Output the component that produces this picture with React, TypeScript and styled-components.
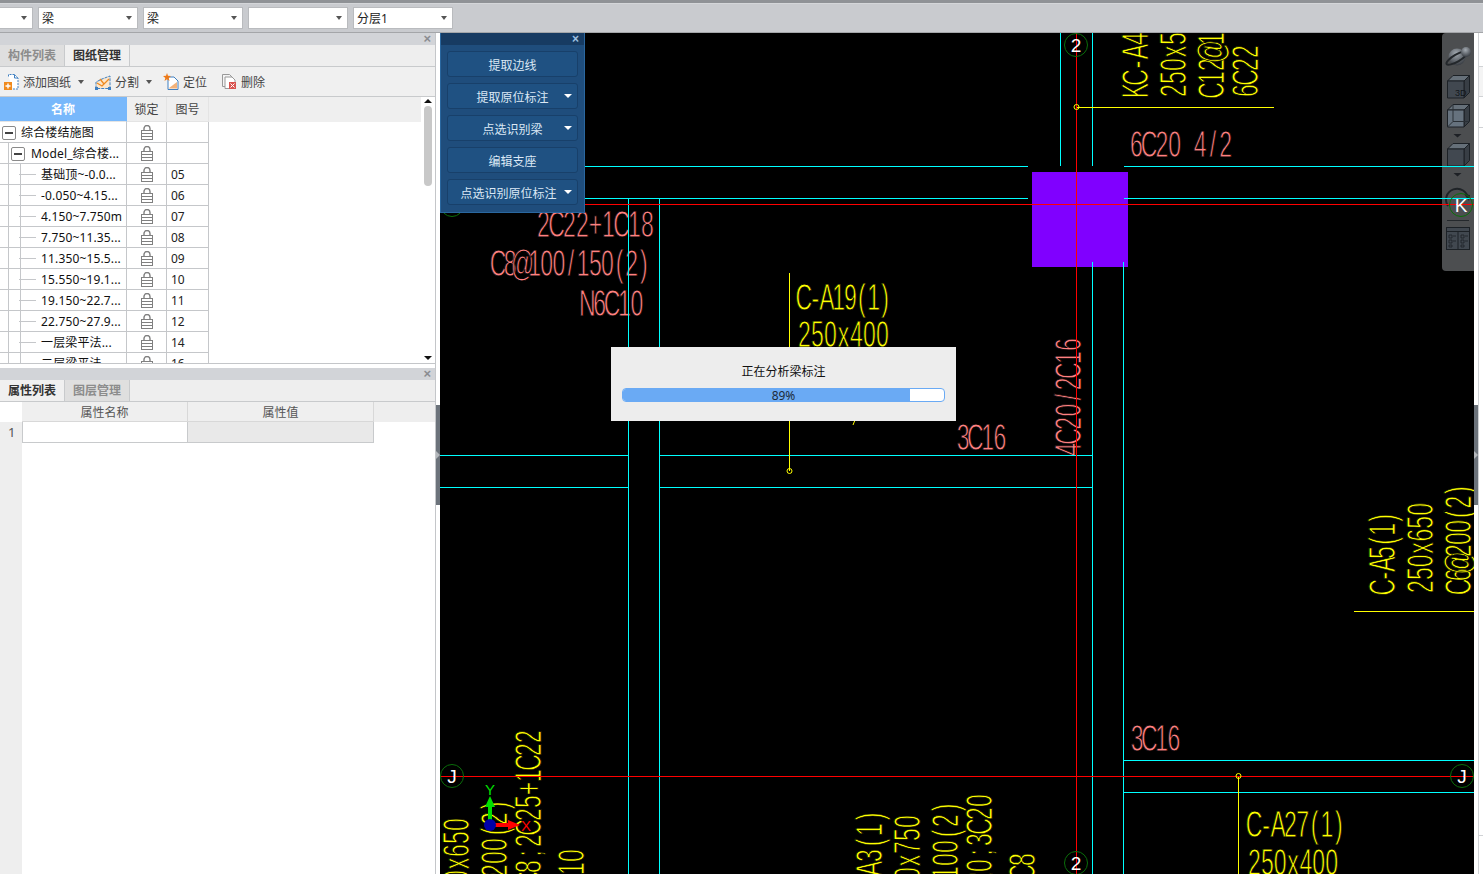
import React from 'react'
import styled, { createGlobalStyle } from 'styled-components'

const GlobalStyle = createGlobalStyle`
    html, body { margin: 0; padding: 0; height: 100%; overflow: hidden; background: #fff; }
    #root { height: 100%; }
    * { box-sizing: border-box; }
`

const UI_FONT = '"Noto Sans", "Noto Sans CJK SC", sans-serif'

/* top bar */
const Page = styled.div`
    display: flex;
    flex-direction: column;
    height: 100vh;
    font-family: ${UI_FONT};
    font-size: 12px;
    color: #222;
`

const TopBar = styled.div`
    flex: none;
    display: flex;
    align-items: flex-start;
    gap: 5px;
    height: 33px;
    padding-top: 4px;
    background: #c9cbcf;
    border-top: 3px solid #8f9296;
    border-bottom: 1px solid #a4a6a9;
    box-shadow: inset 0 1px 0 #d4d6d9;
`

const Combo = styled.div<{ $clipped?: boolean }>`
    position: relative;
    width: ${p => (p.$clipped ? '33px' : '100px')};
    height: 22px;
    padding: 0 3px;
    line-height: 21px;
    background: #fff;
    border: 1px solid #b9bbbe;
    border-left-width: ${p => (p.$clipped ? 0 : '1px')};
    &::after {
        content: '';
        position: absolute;
        right: 5px;
        top: 8px;
        border: 3.5px solid transparent;
        border-top: 4px solid #555;
    }
`

const Main = styled.div`
    flex: 1;
    display: flex;
    min-height: 0;
`

/* left side */
const LeftPanel = styled.div`
    flex: none;
    display: flex;
    flex-direction: column;
    width: 436px;
    background: #fff;
    border-right: 1px solid #c4c6c9;
`

const PanelTitle = styled.div`
    flex: none;
    display: flex;
    justify-content: flex-end;
    align-items: center;
    height: 12px;
    padding-right: 4px;
    background: #d2d4d8;
    color: #8a8c90;
    font-size: 13px;
    font-family: "Liberation Sans", sans-serif;
    font-weight: bold;
    line-height: 12px;
`

const Tabs = styled.div`
    flex: none;
    display: flex;
    height: 22px;
    background: #eeeeee;
    border-bottom: 1px solid #c8cacc;
`

const Tab = styled.div<{ $active?: boolean }>`
    width: 65px;
    padding-left: 8px;
    line-height: 21px;
    font-weight: 700;
    font-size: 12px;
    color: ${p => (p.$active ? '#333' : '#8c8c8c')};
    background: ${p => (p.$active ? '#f0f0f0' : '#dfdfdf')};
    border-right: 1px solid #c8cacc;
`

const Tools = styled.div`
    flex: none;
    display: flex;
    align-items: center;
    height: 29px;
    margin-bottom: 1px;
    padding-left: 4px;
    background: #f0f0f0;
    box-shadow: 0 1px 0 #c8cacc;
`

const Tool = styled.div<{ $w: number }>`
    display: flex;
    align-items: center;
    gap: 4px;
    width: ${p => p.$w}px;
    color: #444;
`

const SmallCaret = styled.span`
    margin-left: 3px;
    margin-top: 4px;
    border: 3px solid transparent;
    border-top: 4px solid #555;
`

const DrawingList = styled.div`
    flex: none;
    display: flex;
    height: 267px;
    border-bottom: 1px solid #c4c6c9;
    overflow: hidden;
`

const ListBody = styled.div`
    flex: 1;
    min-width: 0;
`

const HeaderRow = styled.div`
    display: flex;
    height: 25px;
    background: #efefef;
`

const HeaderCell = styled.div<{ $w: number; $active?: boolean }>`
    width: ${p => p.$w}px;
    line-height: 26px;
    text-align: center;
    font-weight: ${p => (p.$active ? 700 : 400)};
    color: ${p => (p.$active ? '#fff' : '#444')};
    background: ${p => (p.$active ? '#78b8fb' : '#efefef')};
    border-right: 1px solid ${p => (p.$active ? '#78b8fb' : '#e4e4e4')};
    border-bottom: 1px solid #e4e4e4;
`

const Row = styled.div`
    display: flex;
    width: 209px;
    height: 21px;
    border-bottom: 1px solid #c5c7ca;
`

const NameCell = styled.div<{ $indent: number; $leaf?: boolean; $nested?: boolean }>`
    position: relative;
    width: 127px;
    padding-left: ${p => p.$indent}px;
    line-height: 22px;
    letter-spacing: 0.15px;
    white-space: nowrap;
    color: #111;
    border-right: 1px solid #c5c7ca;
    &::before {
        content: '';
        display: ${p => (p.$nested ? 'block' : 'none')};
        position: absolute;
        left: 8px;
        top: 0;
        bottom: -1px;
        width: 11px;
        border-left: 1px solid #c5c7ca;
        border-right: ${p => (p.$leaf ? '1px solid #c5c7ca' : '0')};
    }
    &::after {
        content: '';
        display: ${p => (p.$leaf ? 'block' : 'none')};
        position: absolute;
        left: 19px;
        top: 10px;
        width: 17px;
        border-top: 1px solid #c5c7ca;
    }
`

const Expander = styled.span<{ $left: number }>`
    position: absolute;
    z-index: 1;
    left: ${p => p.$left}px;
    top: 4px;
    width: 14px;
    height: 14px;
    background: #fff;
    border: 1px solid #8a8a8a;
    border-radius: 2px;
    &::after {
        content: '';
        position: absolute;
        left: 2px;
        right: 2px;
        top: 5px;
        border-top: 2px solid #444;
    }
`

const LockCell = styled.div`
    display: flex;
    align-items: center;
    justify-content: center;
    width: 40px;
    padding: 1px 0 0 1px;
    border-right: 1px solid #c5c7ca;
`

const NumberCell = styled.div`
    width: 42px;
    padding-left: 4px;
    line-height: 22px;
    color: #222;
    border-right: 1px solid #c5c7ca;
`

const ScrollTrack = styled.div`
    flex: none;
    display: flex;
    flex-direction: column;
    align-items: center;
    width: 14px;
    padding-top: 2px;
`

const ScrollArrow = styled.span<{ $down?: boolean }>`
    flex: none;
    border-left: 4.5px solid transparent;
    border-right: 4.5px solid transparent;
    border-${p => (p.$down ? 'top' : 'bottom')}: 4px solid #111;
    margin-top: ${p => (p.$down ? 'auto' : '0')};
    margin-bottom: ${p => (p.$down ? '3px' : '0')};
`

const ScrollThumb = styled.div`
    flex: none;
    width: 8px;
    height: 80px;
    margin-top: 3px;
    border-radius: 4px;
    background: #c8c8c8;
`

const PanelGap = styled.div`
    flex: none;
    height: 4px;
`

const PropHeader = styled.div`
    flex: none;
    display: flex;
    height: 20px;
    padding-left: 22px;
    background: linear-gradient(#fff, #fff) left / 22px 100% no-repeat, #eeeeee;
`

const PropHeadCell = styled.div<{ $w: number }>`
    width: ${p => p.$w}px;
    line-height: 21px;
    text-align: center;
    color: #555;
    background: #efefef;
    border-right: 1px solid #d8d8d8;
    border-bottom: 1px solid #d8d8d8;
`

const PropBody = styled.div`
    flex: 1;
    background: linear-gradient(#eeeeee, #eeeeee) left / 22px 100% no-repeat, #fff;
`

const PropRow = styled.div`
    display: flex;
    height: 21px;
`

const PropIndex = styled.div`
    width: 22px;
    padding-left: 8px;
    line-height: 21px;
    font-size: 13px;
    color: #555;
`

const PropCell = styled.div<{ $w: number; $filled?: boolean }>`
    width: ${p => p.$w}px;
    background: ${p => (p.$filled ? '#e9e9e9' : '#fff')};
    border-right: 1px solid #c8cacc;
    border-bottom: 1px solid #c8cacc;
    border-left: ${p => (p.$filled ? '0' : '1px solid #c8cacc')};
`

/* splitters */
const Splitter = styled.div<{ $w: number }>`
    flex: none;
    display: flex;
    flex-direction: column;
    justify-content: flex-start;
    width: ${p => p.$w}px;
    padding-top: 372px;
    background: #fff;
`

const SplitHandle = styled.div`
    position: relative;
    width: 4px;
    height: 100px;
    background: #6c737b;
    &::after {
        content: '';
        position: absolute;
        left: 0;
        top: 46px;
        border: 4px solid transparent;
        border-left: 4px solid #b4b8bc;
    }
`

const RightStrip = styled.div`
    flex: none;
    display: flex;
    width: 9px;
`

const RightPeek = styled.div`
    flex: 1;
    display: flex;
    flex-direction: column;
    background: #fff;
    border-left: 1px solid #d0d2d5;
`

const PeekBand = styled.div<{ $h: number; $fill: string }>`
    flex: none;
    height: ${p => p.$h}px;
    background: ${p => p.$fill};
    border-bottom: 1px solid #d0d2d5;
`

/* drawing area */
const Canvas = styled.div`
    position: relative;
    flex: 1;
    min-width: 0;
    background: #000;
    overflow: hidden;
`

const CadLayer = styled.svg`
    position: absolute;
    left: 0;
    top: 0;
    z-index: 2;
    pointer-events: none;
`

const CadText = styled.text<{ $tone: string }>`
    font-family: "Liberation Sans", sans-serif;
    font-size: 36px;
    text-anchor: middle;
    fill: ${p => p.$tone};
    stroke: #000;
    stroke-width: 0.9px;
`

const AxisLetter = styled.text`
    font-family: "Liberation Sans", sans-serif;
    font-size: 19px;
    fill: #fff;
    text-anchor: middle;
`

const GizmoLetter = styled.text<{ $tone: string }>`
    font-family: "Liberation Sans", sans-serif;
    font-size: 15px;
    fill: ${p => p.$tone};
    text-anchor: middle;
`

const ToolRail = styled.svg`
    position: absolute;
    right: 0;
    top: 0;
    z-index: 1;
    border-radius: 4px 0 0 4px;
    background: #4c4e50;
`

const RecognizePanel = styled.div`
    position: absolute;
    left: 0;
    top: 0;
    z-index: 3;
    display: flex;
    flex-direction: column;
    gap: 6px;
    width: 145px;
    height: 180px;
    padding: 0 6px;
    background: #1f4d7c;
    border: 1px solid #2a679f;
    border-top: 0;
`

const RecognizeTitle = styled.div`
    display: flex;
    justify-content: flex-end;
    align-items: center;
    height: 12px;
    margin: 0 -6px;
    padding-right: 5px;
    background: #173b62;
    color: #9fc0e0;
    font-family: "Liberation Sans", sans-serif;
    font-size: 12px;
    font-weight: bold;
`

const RecognizeButton = styled.div<{ $menu?: boolean; $long?: boolean }>`
    position: relative;
    flex: none;
    height: 26px;
    line-height: 27px;
    text-align: center;
    color: #dbe8f5;
    background: #1f5182;
    border: 1px solid #18406a;
    border-radius: 3px;
    padding-right: ${p => (p.$long ? '8px' : '0')};
    &::after {
        content: '';
        display: ${p => (p.$menu ? 'block' : 'none')};
        position: absolute;
        right: 5px;
        top: 10px;
        border-left: 4px solid transparent;
        border-right: 4px solid transparent;
        border-top: 4px solid #fff;
    }
`

const ProgressDialog = styled.div`
    position: absolute;
    left: 171px;
    top: 314px;
    z-index: 4;
    width: 345px;
    height: 74px;
    padding: 16px 11px 0;
    background: #ededed;
`

const ProgressTitle = styled.div`
    height: 25px;
    line-height: 18px;
    text-align: center;
    color: #111;
`

const ProgressTrack = styled.div`
    position: relative;
    height: 14px;
    background: #fff;
    border: 1px solid #6aaaf4;
    border-radius: 4px;
    overflow: hidden;
`

const ProgressFill = styled.div`
    height: 100%;
    background: #6aaaf4;
`

const ProgressLabel = styled.div`
    position: absolute;
    inset: 0;
    line-height: 13px;
    text-align: center;
    color: #1c2a3a;
`

const rows = [
    { name: '基础顶~-0.0...', no: '05' },
    { name: '-0.050~4.15...', no: '06' },
    { name: '4.150~7.750m', no: '07' },
    { name: '7.750~11.35...', no: '08' },
    { name: '11.350~15.5...', no: '09' },
    { name: '15.550~19.1...', no: '10' },
    { name: '19.150~22.7...', no: '11' },
    { name: '22.750~27.9...', no: '12' },
    { name: '一层梁平法...', no: '14' },
    { name: '二层梁平法...', no: '16' },
]

const PINK = '#ff8080'
const YELLOW = '#ffff00'
const GLYPH_SQUEEZE = 0.64

const flatLabels = [
    { t: '2C22+1C18', x: 537, y: 237, w: 117, c: PINK },
    { t: 'C8@100/150(2)', x: 492, y: 276, w: 158, c: PINK },
    { t: 'N6C10', x: 581, y: 316, w: 62, c: PINK },
    { t: '6C20 4/2', x: 1130, y: 157, w: 102, c: PINK },
    { t: '3C16', x: 957, y: 450, w: 49, c: PINK },
    { t: '3C16', x: 1131, y: 751, w: 49, c: PINK },
    { t: 'C-A19(1)', x: 798, y: 310, w: 93, c: YELLOW },
    { t: '250x400', x: 798, y: 347, w: 91, c: YELLOW },
    { t: 'C-A27(1)', x: 1248, y: 837, w: 97, c: YELLOW },
    { t: '250x400', x: 1248, y: 875, w: 90, c: YELLOW },
]

// x is the baseline (right side), y the bottom end of the rotated text
const upLabels = [
    { t: 'KC-A4(1)', x: 1148, y: 97, w: 104, c: YELLOW },
    { t: '250x500', x: 1186, y: 97, w: 91, c: YELLOW },
    { t: 'C12@100', x: 1224, y: 97, w: 91, c: YELLOW },
    { t: '6C22', x: 1258, y: 97, w: 52, c: YELLOW },
    { t: 'C-A5(1)', x: 1395, y: 593, w: 81, c: YELLOW },
    { t: '250x650', x: 1433, y: 593, w: 90, c: YELLOW },
    { t: 'C6@200(2)', x: 1471, y: 593, w: 109, c: YELLOW },
    { t: '4C20/2C16', x: 1081, y: 456, w: 118, c: PINK },
    { t: '2C8;2C25+1C22', x: 541, y: 899, w: 169, c: YELLOW },
    { t: '250x650', x: 469, y: 909, w: 91, c: YELLOW },
    { t: 'C8@200(2)', x: 507, y: 916, w: 117, c: YELLOW },
    { t: '6C10', x: 584, y: 901, w: 52, c: YELLOW },
    { t: 'C-A3(1)', x: 882, y: 901, w: 91, c: YELLOW },
    { t: '250x750', x: 920, y: 906, w: 91, c: YELLOW },
    { t: 'C8@100(2)', x: 958, y: 918, w: 117, c: YELLOW },
    { t: '2C20;3C20', x: 992, y: 911, w: 117, c: YELLOW },
    { t: '6C8', x: 1035, y: 892, w: 39, c: YELLOW },
]

const cyanLines = [
    'M440 166.5H1028', 'M1124 166.5H1474', 'M440 198.5H1028', 'M1124 198.5H1474',
    'M440 455.5H628', 'M659 455.5H1092', 'M440 487.5H628', 'M659 487.5H1092',
    'M1124 760.5H1474', 'M1124 792.5H1474',
    'M628.5 198V874', 'M659.5 198V874', 'M1060.5 33V166', 'M1092.5 33V166',
    'M1092.5 262V874', 'M1123.5 262V874',
]

const axes = [
    { l: '2', x: 1076, y: 45 },
    { l: '2', x: 1076, y: 863 },
    { l: 'J', x: 452, y: 776 },
    { l: 'J', x: 1462, y: 776 },
    { l: 'K', x: 1461, y: 205 },
    { l: '', x: 452, y: 205 },
]

// every character sits in a cell of the same pitch, like a CAD shape font
function CadLabel({ t, x, y, w, c, up }: { t: string; x: number; y: number; w: number; c: string; up?: boolean }) {
    const pitch = w / t.length / GLYPH_SQUEEZE
    const cells = Array.from(t, (_, i) => (i + 0.5) * pitch).join(' ')
    const turn = up ? ' rotate(-90)' : ''
    return (
        <CadText $tone={c} x={cells} y="0" transform={`translate(${x} ${y})${turn} scale(${GLYPH_SQUEEZE} 1)`}>
            {t}
        </CadText>
    )
}

function LockIcon() {
    return (
        <svg width="12" height="15" viewBox="0 0 12 15">
            <path d="M3 6.500V3.500a3 3 0 0 1 6 0V6.500" fill="none" stroke="#808080" strokeWidth="1.4" />
            <rect x="0.5" y="5.500" width="11" height="9" fill="#fff" stroke="#808080" />
            <path d="M1 8.500h10M1 11.500h10" stroke="#808080" />
        </svg>
    )
}

function AddIcon() {
    return (
        <svg width="15" height="16" viewBox="0 0 15 16">
            <path d="M4.500 2.500V.5h6l3.500 3.500v11H9" fill="#fff" stroke="#3f7fc0" strokeDasharray="2 1" />
            <path d="M10.500 .5V4H14" fill="none" stroke="#3f7fc0" />
            <rect x="0" y="8" width="8" height="8" fill="#f08a1d" />
            <path d="M4 9.500v5M1.500 12h5" stroke="#fff" strokeWidth="1.4" />
        </svg>
    )
}

function SplitIcon() {
    return (
        <svg width="16" height="16" viewBox="0 0 16 16">
            <path d="M1 14.500V8l6-3 8-3v12.500z" fill="#fbe6cc" stroke="#3f7fc0" strokeDasharray="3 1" />
            <path d="M2 9l5 3 7-7M5 5l4 5" fill="none" stroke="#ee8a20" strokeWidth="1.3" />
            <path d="M0 13h3v3H0zM13 13h3v3h-3z" fill="#3f7fc0" />
        </svg>
    )
}

function LocateIcon() {
    return (
        <svg width="16" height="17" viewBox="0 0 16 17">
            <path d="M5 4h6l4 4v8.500H5z" fill="#fff" stroke="#3f7fc0" />
            <path d="M6 15l8-6v6.500H6z" fill="#f3b27a" />
            <path d="M4 0l1 2.800 3 .2-2.300 1.900.8 3L4 6.300 1.500 7.900l.8-3L0 3l3-.2z" fill="#ee7a18" />
        </svg>
    )
}

function DeleteIcon() {
    return (
        <svg width="15" height="15" viewBox="0 0 15 15">
            <path d="M.5 .5h7l3 3v9h-10z" fill="#f4f4f4" stroke="#999" />
            <path d="M3 3h7l3 3v8.500H3z" fill="#fff" stroke="#999" />
            <rect x="7" y="8" width="7" height="7" fill="#d9534f" />
            <path d="M8.500 9.500l4 4M12.500 9.500l-4 4" stroke="#fff" />
        </svg>
    )
}

function RailCube({ y, fill, wire, label }: { y: number; fill: string; wire?: boolean; label?: string }) {
    return (
        <g transform={`translate(5 ${y})`} stroke="#1c2126" strokeWidth="1" strokeLinejoin="round">
            <path d="M.5 6 L6 .5 H22.500 L17 6z" fill="#667079" />
            <path d="M17 6 L22.500 .5 V17.500 L17 23z" fill="#383e45" />
            <rect x=".5" y="6" width="16.500" height="17" fill={fill} />
            {wire && <path d="M6 .5V17.500H22.500M6 17.500L.5 23" fill="none" stroke="#2a3036" />}
            {label && (
                <text x="8" y="21" fontSize="9" fontFamily='"Liberation Sans", sans-serif' fill="#11161a" stroke="none">
                    {label}
                </text>
            )}
        </g>
    )
}

function RailIcons() {
    return (
        <ToolRail width="32" height="238" viewBox="0 0 32 238">
            <defs>
                <radialGradient id="planet" cx="0.45" cy="0.3" r="0.75">
                    <stop offset="0" stopColor="#a4abb2" />
                    <stop offset="1" stopColor="#30343a" />
                </radialGradient>
            </defs>
            <circle cx="15" cy="24" r="8.500" fill="url(#planet)" />
            <ellipse cx="15" cy="25" rx="12" ry="3.500" transform="rotate(-30 15 25)" fill="none" stroke="#23272b" strokeWidth="2" />
            <circle cx="24" cy="19" r="5" fill="url(#planet)" />
            <RailCube y={42} fill="#414850" label="3D" />
            <RailCube y={71} fill="#66727e" wire />
            <path d="M11.500 101h8l-4 3.500z" fill="#1d2025" />
            <RailCube y={110} fill="#414850" />
            <path d="M11.500 140h8l-4 3.500z" fill="#1d2025" />
            <path d="M6 173a11 11 0 1 1 20-7" fill="none" stroke="#1f2327" strokeWidth="2" />
            <path d="M22 161l6 1-1 6z" fill="#1f2327" />
            <path d="M5 187.500H27" stroke="#24282c" />
            <g stroke="#1c2126" fill="none">
                <rect x="4.500" y="194.500" width="23" height="22" fill="#414850" />
                <path d="M4.500 198.500h23M16 199v17" />
                <path d="M7 202h3v3H7zM7 207h3v3H7zM7 212h3v2H7zM19 202h3v3h-3zM19 207h3v3h-3zM19 212h3v2h-3zM11 203h3M11 208h3M23 203h3M23 208h3" strokeWidth=".8" />
            </g>
        </ToolRail>
    )
}

function CadDrawing() {
    return (
        <CadLayer width="1034" height="841" viewBox="440 33 1034 841">
            {flatLabels.map(l => <CadLabel key={l.t + l.x} {...l} />)}
            {upLabels.map(l => <CadLabel key={l.t + l.x} {...l} up />)}
            <rect x="1032" y="172" width="96" height="95" fill="#8000ff" />
            <g shapeRendering="crispEdges" fill="none">
                {cyanLines.map(d => <path key={d} d={d} stroke="#00ffff" />)}
                <path d="M789.500 273V471M1076 107.500H1274M1238.500 776V874M1354 611.500H1474" stroke={YELLOW} />
                <path d="M440 204.500H1474M440 776.500H1474M1076.500 33V874" stroke="#ff0000" />
            </g>
            <path d="M853 425l2-5" stroke={YELLOW} fill="none" />
            {[[1076, 107], [789, 471], [1238, 776]].map(([x, y]) => (
                <circle key={x} cx={x + 0.5} cy={y} r="2.500" fill="none" stroke={YELLOW} />
            ))}
            {axes.map(a => (
                <g key={a.l + a.x}>
                    <circle cx={a.x} cy={a.y} r="11.500" fill="none" stroke="#0a6e0a" />
                    {a.l && <AxisLetter x={a.x} y={a.y + 7}>{a.l}</AxisLetter>}
                </g>
            ))}
            <path d="M488 822V805h4v17z" fill="#00e000" />
            <path d="M490 796l5 11h-10z" fill="#00e000" />
            <path d="M495 823h14v4h-14z" fill="#ff0000" />
            <path d="M508 820l12 5-12 5z" fill="#ff0000" />
            <circle cx="490" cy="825" r="6" fill="#0000a8" />
            <GizmoLetter $tone="#00e000" x="490" y="795">Y</GizmoLetter>
            <GizmoLetter $tone="#ff0000" x="526" y="831">X</GizmoLetter>
        </CadLayer>
    )
}

function App() {
    return (
        <Page>
            <GlobalStyle />
            <TopBar>
                <Combo $clipped />
                <Combo>梁</Combo>
                <Combo>梁</Combo>
                <Combo />
                <Combo>分层1</Combo>
            </TopBar>

            <Main>
                <LeftPanel>
                    <PanelTitle>×</PanelTitle>
                    <Tabs>
                        <Tab>构件列表</Tab>
                        <Tab $active>图纸管理</Tab>
                    </Tabs>
                    <Tools>
                        <Tool $w={91}><AddIcon />添加图纸<SmallCaret /></Tool>
                        <Tool $w={68}><SplitIcon />分割<SmallCaret /></Tool>
                        <Tool $w={59}><LocateIcon />定位</Tool>
                        <Tool $w={60}><DeleteIcon />删除</Tool>
                    </Tools>

                    <DrawingList>
                        <ListBody>
                            <HeaderRow>
                                <HeaderCell $w={127} $active>名称</HeaderCell>
                                <HeaderCell $w={40}>锁定</HeaderCell>
                                <HeaderCell $w={42}>图号</HeaderCell>
                            </HeaderRow>
                            <Row>
                                <NameCell $indent={21}><Expander $left={2} />综合楼结施图</NameCell>
                                <LockCell><LockIcon /></LockCell>
                                <NumberCell />
                            </Row>
                            <Row>
                                <NameCell $indent={31} $nested><Expander $left={11} />Model_综合楼...</NameCell>
                                <LockCell><LockIcon /></LockCell>
                                <NumberCell />
                            </Row>
                            {rows.map(r => (
                                <Row key={r.no}>
                                    <NameCell $indent={41} $nested $leaf>{r.name}</NameCell>
                                    <LockCell><LockIcon /></LockCell>
                                    <NumberCell>{r.no}</NumberCell>
                                </Row>
                            ))}
                        </ListBody>
                        <ScrollTrack>
                            <ScrollArrow />
                            <ScrollThumb />
                            <ScrollArrow $down />
                        </ScrollTrack>
                    </DrawingList>

                    <PanelGap />
                    <PanelTitle>×</PanelTitle>
                    <Tabs>
                        <Tab $active>属性列表</Tab>
                        <Tab>图层管理</Tab>
                    </Tabs>
                    <PropHeader>
                        <PropHeadCell $w={166}>属性名称</PropHeadCell>
                        <PropHeadCell $w={186}>属性值</PropHeadCell>
                    </PropHeader>
                    <PropBody>
                        <PropRow>
                            <PropIndex>1</PropIndex>
                            <PropCell $w={166} />
                            <PropCell $w={186} $filled />
                        </PropRow>
                    </PropBody>
                </LeftPanel>

                <Splitter $w={4}><SplitHandle /></Splitter>

                <Canvas>
                    <RailIcons />
                    <CadDrawing />
                    <RecognizePanel>
                        <RecognizeTitle>×</RecognizeTitle>
                        <RecognizeButton>提取边线</RecognizeButton>
                        <RecognizeButton $menu>提取原位标注</RecognizeButton>
                        <RecognizeButton $menu>点选识别梁</RecognizeButton>
                        <RecognizeButton>编辑支座</RecognizeButton>
                        <RecognizeButton $menu $long>点选识别原位标注</RecognizeButton>
                    </RecognizePanel>
                    <ProgressDialog>
                        <ProgressTitle>正在分析梁标注</ProgressTitle>
                        <ProgressTrack>
                            <ProgressFill style={{ width: '89.3%' }} />
                            <ProgressLabel>89%</ProgressLabel>
                        </ProgressTrack>
                    </ProgressDialog>
                </Canvas>

                <RightStrip>
                    <Splitter $w={4}><SplitHandle /></Splitter>
                    <RightPeek>
                        <PeekBand $h={34} $fill="#fff" />
                        <PeekBand $h={30} $fill="#f4f4f4" />
                        <PeekBand $h={31} $fill="#fff" />
                        <PeekBand $h={708} $fill="#fff" />
                    </RightPeek>
                </RightStrip>
            </Main>
        </Page>
    )
}

export default App
